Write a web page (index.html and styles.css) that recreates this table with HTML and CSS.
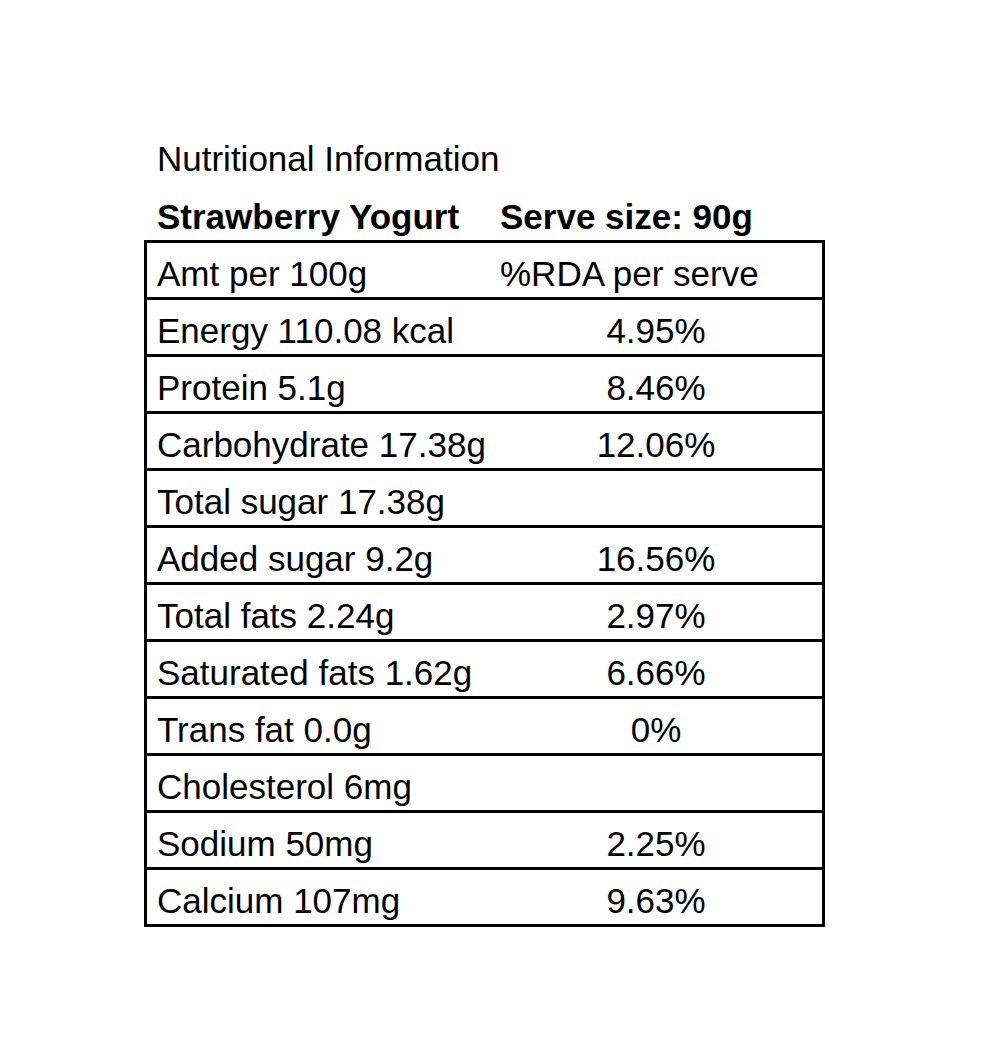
FILE: index.html
```html
<!DOCTYPE html>
<html lang="en">
<head>
<meta charset="utf-8">
<title>Nutritional Information</title>
<link rel="stylesheet" href="styles.css">
</head>
<body>
<main class="sheet">
  <div class="title">Nutritional Information</div>
  <div class="head">
    <div class="head-name">Strawberry Yogurt</div>
    <div class="head-serve">Serve size: 90g</div>
  </div>
  <div class="panel">
    <div class="row"><div class="c1">Amt per 100g</div><div class="c2 left">%RDA per serve</div></div>
    <div class="row"><div class="c1">Energy 110.08 kcal</div><div class="c2">4.95%</div></div>
    <div class="row"><div class="c1">Protein 5.1g</div><div class="c2">8.46%</div></div>
    <div class="row"><div class="c1">Carbohydrate 17.38g</div><div class="c2">12.06%</div></div>
    <div class="row"><div class="c1">Total sugar 17.38g</div><div class="c2"></div></div>
    <div class="row"><div class="c1">Added sugar 9.2g</div><div class="c2">16.56%</div></div>
    <div class="row"><div class="c1">Total fats 2.24g</div><div class="c2">2.97%</div></div>
    <div class="row"><div class="c1">Saturated fats 1.62g</div><div class="c2">6.66%</div></div>
    <div class="row"><div class="c1">Trans fat 0.0g</div><div class="c2">0%</div></div>
    <div class="row"><div class="c1">Cholesterol 6mg</div><div class="c2"></div></div>
    <div class="row"><div class="c1">Sodium 50mg</div><div class="c2">2.25%</div></div>
    <div class="row"><div class="c1">Calcium 107mg</div><div class="c2">9.63%</div></div>
  </div>
</main>
</body>
</html>
```

FILE: styles.css
```css
html, body {
  margin: 0;
  padding: 0;
  background: #ffffff;
}

body {
  font-family: "Liberation Sans", Arial, sans-serif;
  font-size: 35px;
  color: #000000;
}

.sheet {
  width: 681px;
  margin-left: 144px;
  padding-top: 136px;
}

.title {
  padding-left: 13px;
  line-height: 46px;
  margin-bottom: 12px;
}

.head {
  display: grid;
  grid-template-columns: 346px 1fr;
  font-weight: bold;
  line-height: 46px;
}

.head-name {
  padding-left: 13px;
}

.head-serve {
  padding-left: 10px;
}

.panel {
  border: 3px solid #000000;
  border-top: 0;
}

.row {
  display: grid;
  grid-template-columns: 343px 1fr;
  border-top: 3px solid #000000;
  height: 57px;
  box-sizing: border-box;
  padding-top: 8px;
  line-height: 46px;
  white-space: nowrap;
}

.c1 {
  padding-left: 10px;
}

.c2 {
  text-align: center;
}

.c2.left {
  text-align: left;
  padding-left: 10px;
}
```
